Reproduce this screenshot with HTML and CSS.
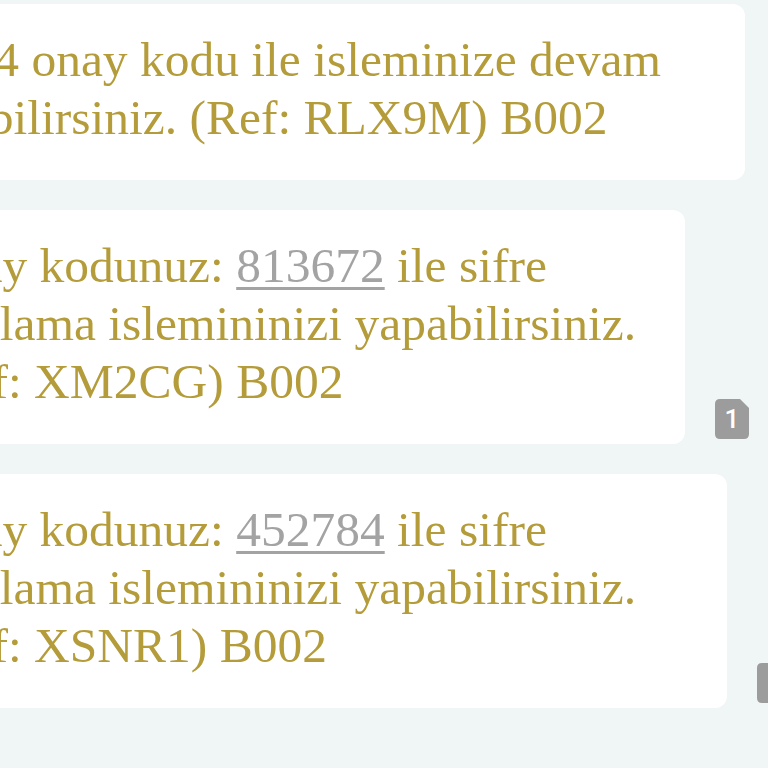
FILE: index.html
```html
<!DOCTYPE html>
<html lang="tr">
<head>
  <meta charset="UTF-8">
  <title>Mesajlar</title>
  <link rel="stylesheet" href="styles.css">
</head>
<body>
  <div class="chat">
    <div class="row">
      <div class="bubble bubble-wide">
        1234 onay kodu ile isleminize devam<br>
        edebilirsiniz. (Ref: RLX9M) B002
      </div>
      <svg class="sim" viewBox="0 0 34 40" width="34" height="40">
        <path d="M5 0H25L34 9V35Q34 40 29 40H5Q0 40 0 35V5Q0 0 5 0Z" fill="#9c9c9c"/>
        <text x="17" y="29" text-anchor="middle">1</text>
      </svg>
    </div>
    <div class="row">
      <div class="bubble bubble-short">
        Onay kodunuz: <span class="code">813672</span> ile sifre<br>
        sifirlama islemininizi yapabilirsiniz.<br>
        (Ref: XM2CG) B002
      </div>
      <svg class="sim" viewBox="0 0 34 40" width="34" height="40">
        <path d="M5 0H25L34 9V35Q34 40 29 40H5Q0 40 0 35V5Q0 0 5 0Z" fill="#9c9c9c"/>
        <text x="17" y="29" text-anchor="middle">1</text>
      </svg>
    </div>
    <div class="row">
      <div class="bubble bubble-mid">
        Onay kodunuz: <span class="code">452784</span> ile sifre<br>
        sifirlama islemininizi yapabilirsiniz.<br>
        (Ref: XSNR1) B002
      </div>
      <svg class="sim" viewBox="0 0 34 40" width="34" height="40">
        <path d="M5 0H25L34 9V35Q34 40 29 40H5Q0 40 0 35V5Q0 0 5 0Z" fill="#9c9c9c"/>
        <text x="17" y="29" text-anchor="middle">1</text>
      </svg>
    </div>
  </div>
</body>
</html>
```

FILE: styles.css
```css
html, body {
  margin: 0;
  padding: 0;
  background: #f0f5f6;
  overflow: hidden;
}
.chat {
  margin-left: -104px;
  padding-top: 4px;
  display: flex;
  flex-direction: column;
  gap: 30px;
}
.row {
  display: flex;
  align-items: flex-end;
  gap: 30px;
}
.bubble {
  flex: none;
  box-sizing: border-box;
  background: #fff;
  border-radius: 12px;
  padding: 27px 24px 33px;
  font-family: "Liberation Serif", "Times New Roman", serif;
  font-size: 49.5px;
  line-height: 58px;
  color: #b59c3a;
  white-space: nowrap;
}
.bubble-wide {
  width: 849px;
}
.bubble-short {
  width: 789px;
}
.bubble-mid {
  width: 831px;
}
.code {
  color: #a3a3a3;
  text-decoration: underline;
  text-decoration-thickness: 3px;
  text-underline-offset: 5px;
}
.sim {
  flex: none;
  margin-bottom: 5px;
}
.sim text {
  font-family: Roboto, "Noto Sans", sans-serif;
  font-size: 26px;
  font-weight: 500;
  fill: #fff;
}
```
